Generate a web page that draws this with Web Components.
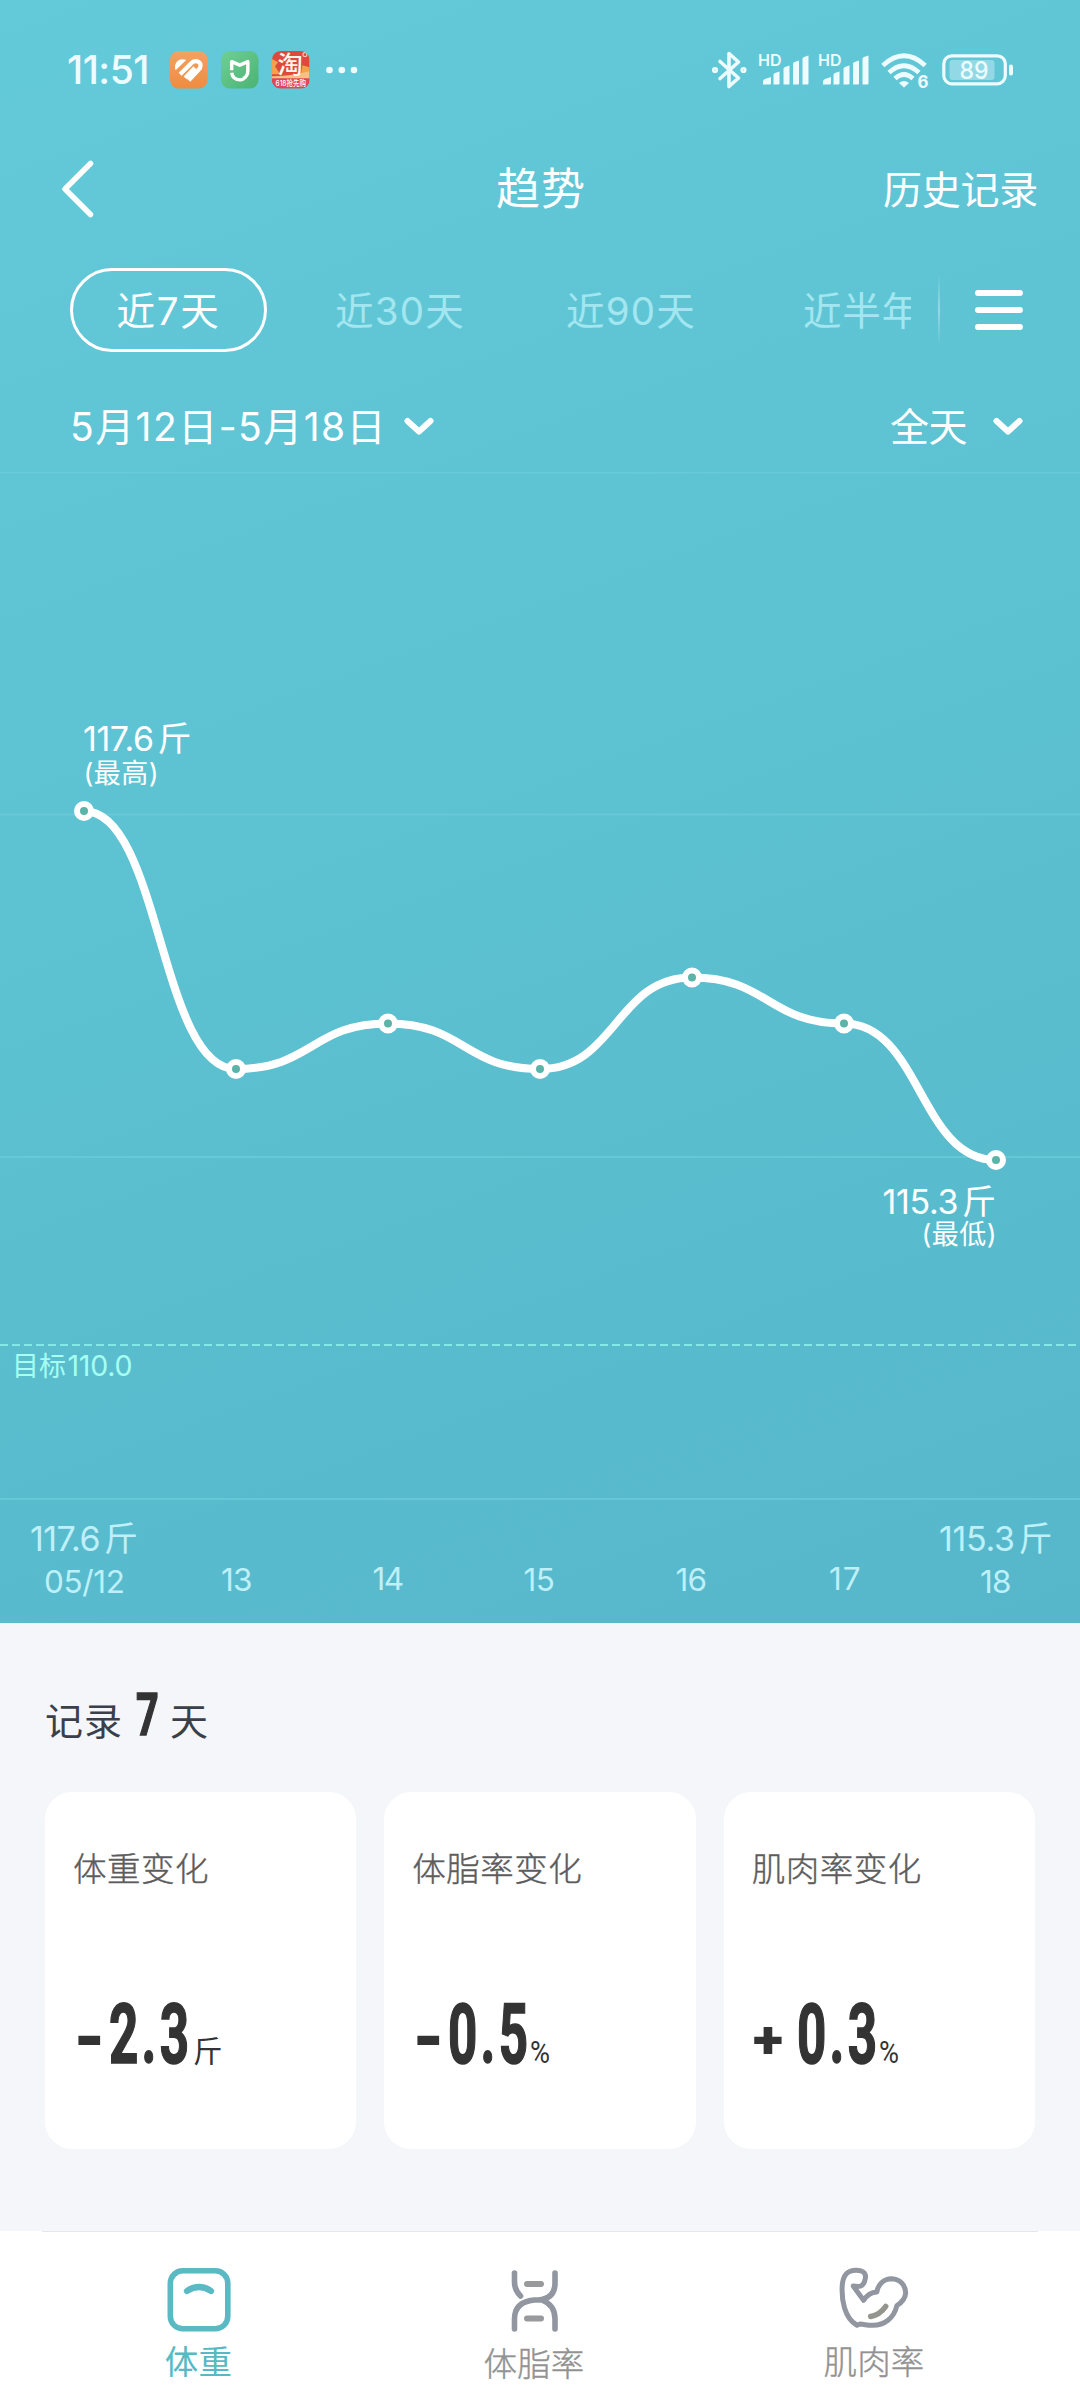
<!DOCTYPE html>
<html lang="zh-CN">
<head>
<meta charset="utf-8">
<title>趋势</title>
<style>
    body {
        margin: 0;
        width: 1080px;
        height: 2400px;
        overflow: hidden;
        background: #f4f6fa;
        font-family: Inter, "Noto Sans CJK SC", sans-serif;
    }
</style>
</head>
<body>
<trend-page></trend-page>

<script>
/**
 * Single line of text tracked out (or in) to a fixed width.
 */
class FitText extends HTMLElement {
    constructor() {
        super();
        this.attachShadow({ mode: 'open' });
    }

    connectedCallback() {
        const text = this.getAttribute('text') || '';
        this.shadowRoot.innerHTML = `
            <style>
                :host { display: block; white-space: nowrap; line-height: 1.2; }
                span { display: inline-block; }
            </style>
            <span>${text}</span>
        `;
        const width = Number(this.getAttribute('width'));
        if (!width) return;
        const span = this.shadowRoot.querySelector('span');
        const gap = (width - span.getBoundingClientRect().width) / text.length;
        span.style.letterSpacing = `${gap}px`;
    }
}

class StatusBar extends HTMLElement {
    constructor() {
        super();
        this.attachShadow({ mode: 'open' });
    }

    signal() {
        return `
            <svg width="52" height="34" viewBox="0 0 52 34" fill="#ecfcff">
                <text x="0" y="13" font-size="15.500" font-weight="600" textLength="23.500" lengthAdjust="spacingAndGlyphs">HD</text>
                <path d="M5 31.500v-3q0-2 2-2.500l6-2v6q0 1.500-1.500 1.500z"/>
                <path d="M15.500 31.500V22q0-1.500 1.500-2l4.500-1.500v12q0 1-1 1z"/>
                <path d="M25.500 31.500V16q0-1.500 1.500-2l4.500-1.500v18q0 1-1 1z"/>
                <path d="M35 31.500V11q0-1.500 1.500-2L41 7.500v23q0 1-1 1z"/>
                <path d="M44.500 31.500V6q0-1.500 1.500-2l4.500-1.500v28q0 1-1 1z"/>
            </svg>
        `;
    }

    connectedCallback() {
        this.shadowRoot.innerHTML = `
            <style>
                :host {
                    display: flex;
                    align-items: center;
                    height: 140px;
                    padding: 0 67px 0 67px;
                    box-sizing: border-box;
                    color: #ecfcff;
                }
                svg { display: block; flex: none; overflow: visible; }
                .time { font-size: 39px; font-weight: 500; width: 103px; }
                .apps { display: flex; gap: 13.500px; }
                .dots { margin-left: 16px; }
                .system { display: flex; align-items: center; margin-left: auto; }
            </style>
            <fit-text class="time" text="11:51" width="82"></fit-text>
            <div class="apps">
                <svg width="37.500" height="37.500" viewBox="0 0 37 37">
                    <defs><linearGradient id="o" x2="0" y2="1"><stop stop-color="#f0a363"/><stop offset="1" stop-color="#f08b3f"/></linearGradient></defs>
                    <rect width="37" height="37" rx="8.500" fill="url(#o)"/>
                    <path d="M5.500 19C3 12 9 5.500 16 9z" fill="#fff"/>
                    <path d="M10 23 20.500 12.500C25 7.500 32.500 11 29.500 17L18.500 29M15 26.500 24.500 16.500" fill="none" stroke="#fff" stroke-width="4.200"/>
                </svg>
                <svg width="37.500" height="37.500" viewBox="0 0 37 37">
                    <defs><linearGradient id="g" x2="1" y2="1"><stop stop-color="#6fcf94"/><stop offset="1" stop-color="#4bb374"/></linearGradient></defs>
                    <rect width="37" height="37" rx="8.500" fill="url(#g)"/>
                    <path d="M10.500 19v-8.500l8 3.500 8-3.500V19c0 4-2 7-4.500 8.200M10.500 21.500c.8 4.500 4 7 8.200 7q2 0 3.500-1" fill="none" stroke="#fff" stroke-width="3.400" stroke-linejoin="round"/>
                </svg>
                <svg width="37.500" height="37.500" viewBox="0 0 37 37">
                    <defs><clipPath id="c"><rect width="37" height="37" rx="8.500"/></clipPath></defs>
                    <g clip-path="url(#c)">
                        <rect width="37" height="37" fill="#dd4a3c"/>
                        <path d="M0 8l6 3-3 4 5 8H0zM30 14l7 2v8l-9 2z" fill="#f2a24c"/>
                        <path d="M0 25q18 0 37-5v8H0z" fill="#f5c184"/>
                        <path d="M0 27h37v10H0z" fill="#e2455a"/>
                        <circle cx="32.500" cy="3.500" r="2" fill="none" stroke="#fbd9d4"/>
                    </g>
                    <text x="5.500" y="22" font-size="24" font-weight="500" fill="#fff6ea" textLength="25" lengthAdjust="spacingAndGlyphs">淘</text>
                    <text x="3.500" y="34.500" font-size="7.500" font-weight="500" fill="#fff" textLength="30" lengthAdjust="spacingAndGlyphs">618抢先购</text>
                </svg>
            </div>
            <svg class="dots" width="32" height="8" viewBox="0 0 32 8" fill="#ecfcff">
                <circle cx="3.500" cy="4" r="3.300"/><circle cx="15.800" cy="4" r="3.300"/><circle cx="28" cy="4" r="3.300"/>
            </svg>
            <div class="system">
                <svg width="47" height="40" viewBox="0 0 47 40" fill="none" stroke="#ecfcff" stroke-width="3.600" stroke-linecap="round" stroke-linejoin="round">
                    <path d="M9 11.500 27.500 28 18 36.500V3.500L27.500 12 9 28.500"/>
                    <circle cx="4" cy="20" r="1.300"/><circle cx="32.500" cy="20" r="1.300"/>
                </svg>
                ${this.signal()}
                <svg width="8" height="1"></svg>
                ${this.signal()}
                <svg style="margin-left: 11px" width="48" height="40" viewBox="0 0 48 40" fill="none" stroke="#ecfcff" stroke-width="4.600">
                    <path d="M1.800 15.500q21.200-19.500 42.400 0M8 22.500q15-13.500 30 0M14 28.500q9-8 18 0"/>
                    <path d="M18 33q5-4 10 0l-5 4.500z" fill="#ecfcff" stroke="none"/>
                    <text x="36.500" y="37.500" font-size="18" font-weight="700" fill="#ecfcff" stroke="none" textLength="11" lengthAdjust="spacingAndGlyphs">6</text>
                </svg>
                <svg style="margin-left: 13px" width="71" height="32" viewBox="0 0 71 32">
                    <rect x="1.800" y="1.800" width="61.500" height="28" rx="8" fill="none" stroke="#ecfcff" stroke-width="3.200"/>
                    <rect x="7.500" y="6" width="45" height="20" rx="3" fill="#ecfcff" opacity=".36"/>
                    <rect x="67" y="10.500" width="4" height="11" rx="2" fill="#ecfcff"/>
                    <text x="17.500" y="24.700" font-size="24.500" font-weight="500" fill="#ecfcff" textLength="29" lengthAdjust="spacingAndGlyphs">89</text>
                </svg>
            </div>
        `;
    }
}

class TitleBar extends HTMLElement {
    constructor() {
        super();
        this.attachShadow({ mode: 'open' });
    }

    connectedCallback() {
        this.shadowRoot.innerHTML = `
            <style>
                :host {
                    display: grid;
                    grid-template-columns: 1fr auto 1fr;
                    align-items: center;
                    height: 98px;
                    padding: 0 42px 0 60px;
                    color: #fff;
                }
                .title { font-size: 44px; margin-left: -16px; }
                .history { font-size: 39px; justify-self: end; padding-top: 2px; }
            </style>
            <svg width="36" height="60" viewBox="0 0 36 60" fill="none" stroke="#fff" stroke-width="5.500" stroke-linecap="round" stroke-linejoin="round">
                <path d="M30.500 4.500 5 30l25.500 25.500"/>
            </svg>
            <fit-text class="title" text="${this.getAttribute('heading')}" width="90"></fit-text>
            <fit-text class="history" text="${this.getAttribute('action')}" width="155"></fit-text>
        `;
    }
}

class RangeTabs extends HTMLElement {
    constructor() {
        super();
        this.attachShadow({ mode: 'open' });
    }

    connectedCallback() {
        this.shadowRoot.innerHTML = `
            <style>
                :host {
                    display: flex;
                    align-items: center;
                    height: 144px;
                    padding: 0 56px 0 70px;
                    font-size: 38.500px;
                    color: #a3e6f0;
                }
                .strip {
                    display: flex;
                    align-items: center;
                    width: 842px;
                    overflow: hidden;
                }
                .strip > * { flex: none; }
                fit-text { padding-top: 2px; }
                .active {
                    display: flex;
                    align-items: center;
                    justify-content: center;
                    width: 197px;
                    height: 84px;
                    box-sizing: border-box;
                    border: 3px solid #fff;
                    border-radius: 42px;
                    color: #fff;
                }
                .divider {
                    width: 2px;
                    height: 72px;
                    margin: 0 34px 0 27px;
                    background: linear-gradient(transparent, rgba(255, 255, 255, .35), transparent);
                }
            </style>
            <div class="strip">
                <div class="active"><fit-text text="近7天" width="104"></fit-text></div>
                <fit-text style="margin-left: 68px" text="近30天" width="130"></fit-text>
                <fit-text style="margin-left: 101px" text="近90天" width="130"></fit-text>
                <fit-text style="margin-left: 107px" text="近半年" width="118"></fit-text>
            </div>
            <div class="divider"></div>
            <svg width="50" height="42" viewBox="0 0 50 42" stroke="#fff" stroke-width="6" stroke-linecap="round">
                <path d="M4 4h42M4 21h42M4 38h42"/>
            </svg>
        `;
    }
}

class FilterRow extends HTMLElement {
    constructor() {
        super();
        this.attachShadow({ mode: 'open' });
    }

    connectedCallback() {
        const arrow = `
            <svg width="32" height="20" viewBox="0 0 32 20" fill="none" stroke="#fff" stroke-width="6" stroke-linecap="round" stroke-linejoin="round">
                <path d="M4.500 4 16 14.500 27.500 4"/>
            </svg>
        `;
        this.shadowRoot.innerHTML = `
            <style>
                :host {
                    display: flex;
                    align-items: center;
                    justify-content: space-between;
                    height: 90px;
                    padding: 0 56px 0 70px;
                    font-size: 39px;
                    color: #fff;
                }
                div { display: flex; align-items: center; }
            </style>
            <div><fit-text style="width: 333px" text="${this.getAttribute('dates')}" width="317"></fit-text>${arrow}</div>
            <div><fit-text style="width: 102px" text="${this.getAttribute('period')}" width="77"></fit-text>${arrow}</div>
        `;
    }
}

class WeightChart extends HTMLElement {
    constructor() {
        super();
        this.attachShadow({ mode: 'open' });
    }

    // number and unit share one line, the unit sits a little apart
    weight(value, x, y, width) {
        return `<text class="value" x="${x}" y="${y}"><tspan textLength="${width}">${value}</tspan><tspan x="${x + width + 3.5}">斤</tspan></text>`;
    }

    connectedCallback() {
        const points = [[84, 339], [236, 597], [388, 551.500], [540, 597], [692, 505.500], [844, 551.500], [996, 688]];
        const line = points.map(([x, y], i) => {
            if (i === 0) return `M${x} ${y}`;
            const [px, py] = points[i - 1];
            return `C${px + 76} ${py} ${x - 76} ${y} ${x} ${y}`;
        }).join('');
        const days = [['13', 222, 1119], ['14', 373.500, 1118], ['15', 524.500, 1119], ['16', 676.500, 1119], ['17', 830, 1118], ['18', 981, 1121]];

        this.shadowRoot.innerHTML = `
            <style>
                :host { display: block; height: 1151px; }
                svg { display: block; }
                .grid { stroke: #70cfdc; stroke-opacity: .6; stroke-width: 2; }
                .value { font-size: 34px; }
                .note { font-size: 27px; }
                .day { font-size: 31.500px; }
                .axis { fill: #bdf0f9; }
            </style>
            <svg width="1080" height="1151" viewBox="0 0 1080 1151" fill="#fff">
                <path class="grid" d="M0 .5h1080M0 342.500h1080M0 685h1080M0 1027h1080"/>
                <path d="M0 873h1080" stroke="#86e8e6" stroke-width="2" stroke-dasharray="8 4"/>
                <text x="12" y="904" fill="#a6fff0" class="note"><tspan>目标</tspan><tspan x="67.500" font-size="28.500" textLength="65">110.0</tspan></text>

                <path d="${line}" fill="none" stroke="#fff" stroke-width="8"/>
                ${points.map(([x, y]) => `<circle cx="${x}" cy="${y}" r="7" fill="#5bb4a8" stroke="#fff" stroke-width="6"/>`).join('')}

                ${this.weight('117.6', 83, 279, 71)}
                <text class="note" x="83.500" y="311" textLength="75">(最高)</text>
                ${this.weight('115.3', 882.500, 741.500, 76)}
                <text class="note" x="921.500" y="772" textLength="75">(最低)</text>

                <g class="axis">
                    ${this.weight('117.6', 30, 1079, 70.500)}
                    <text class="day" x="44" y="1121" textLength="81">05/12</text>
                    ${days.map(([d, x, y]) => `<text class="day" x="${x - 1}" y="${y}" textLength="31.500">${d}</text>`).join('')}
                    ${this.weight('115.3', 939, 1079, 76)}
                </g>
            </svg>
        `;
    }
}

class ChangeCard extends HTMLElement {
    constructor() {
        super();
        this.attachShadow({ mode: 'open' });
    }

    connectedCallback() {
        const sign = this.getAttribute('sign');
        const unit = this.getAttribute('unit');
        const label = this.getAttribute('label');
        const start = sign === '+' ? 45 : 36;
        const end = start + 83;
        const signText = sign === '+'
            ? '<text x="1" y="62.500" font-size="51" font-weight="900" textLength="30" lengthAdjust="spacingAndGlyphs">+</text>'
            : '<text x="1" y="70.500" font-size="84" font-weight="700" textLength="31" lengthAdjust="spacingAndGlyphs">-</text>';
        const unitText = unit === '%'
            ? `<text x="${end - 1}" y="68" font-size="31" textLength="20" lengthAdjust="spacingAndGlyphs">%</text>`
            : `<text x="${end + 1}" y="67" font-size="29.500">${unit}</text>`;
        this.shadowRoot.innerHTML = `
            <style>
                :host {
                    display: flex;
                    flex-direction: column;
                    justify-content: space-between;
                    height: 357px;
                    box-sizing: border-box;
                    padding: 57px 27px 74px 28px;
                    border-radius: 27px;
                    background: #fff;
                }
                .label { font-size: 33.500px; font-weight: 300; color: #5c5c5c; -webkit-text-stroke: .4px #5c5c5c; }
                svg { display: block; overflow: visible; font-family: Roboto, "Noto Sans CJK SC", sans-serif; }
            </style>
            <fit-text class="label" text="${label}" width="${label.length * 34}"></fit-text>
            <svg width="200" height="80" viewBox="0 0 200 80" fill="#333">
                ${signText}
                <text transform="translate(${start} 68) scale(.62 1)" font-size="82.500" font-weight="700" stroke="#333" stroke-width="1.600" textLength="129">${this.getAttribute('value')}</text>
                ${unitText}
            </svg>
        `;
    }
}

class RecordSummary extends HTMLElement {
    constructor() {
        super();
        this.attachShadow({ mode: 'open' });
    }

    connectedCallback() {
        this.shadowRoot.innerHTML = `
            <style>
                :host { display: block; height: 608px; padding: 0 45px; box-sizing: border-box; }
                .heading { display: flex; align-items: baseline; height: 169px; font-size: 38px; color: #3a3f49; }
                .heading::before { content: ""; height: 112px; }
                svg { display: block; overflow: visible; font-family: Roboto, sans-serif; }
                .cards { display: grid; grid-template-columns: repeat(3, 1fr); gap: 28px; }
            </style>
            <div class="heading">
                <fit-text text="记录" width="78"></fit-text>
                <svg width="47" height="46" viewBox="0 0 47 46" fill="#333">
                    <text transform="translate(13 46) scale(.66 1)" font-size="60" font-weight="700" stroke="#333" stroke-width="1.500">${this.getAttribute('days')}</text>
                </svg>
                <fit-text text="天"></fit-text>
            </div>
            <div class="cards"><slot></slot></div>
        `;
    }
}

class NavItem extends HTMLElement {
    constructor() {
        super();
        this.attachShadow({ mode: 'open' });
    }

    connectedCallback() {
        const label = this.getAttribute('label');
        const icons = {
            scale: `
                <rect x="5.300" y="2.800" width="57.500" height="58" rx="12.500"/>
                <path d="M22 23q12-8 24 0" stroke-width="6.300"/>
            `,
            dna: `
                <path d="M14.500 5v9q0 8 6 14M55 5v10q0 14-13 16.500c-4 1-5 .2-8 .5Q14.500 34 14.500 51v10M42 32q13 5 13 19v10"/>
                <path d="M27 16h14M27 50.500h14" stroke-width="6" stroke="#999a9b"/>
            `,
            muscle: `
                <path stroke-width="5" d="M17 57.300C4 50 1.500 31 2.200 18 3 6 8 2.300 16 2.300c8.500 0 11 4 8.700 10.500-1 4.500-4 6.800-11.500 5.200L23.600 32.300c3.200-5 7-8 13.200-8.300C38 17 43 10.700 51.800 10.700 60 11 65.500 17 65.700 25c-.4 5.500-4 9.500-8.800 12.500C54 50.500 44 57.300 33 57.300c-5 .2-8-.9-13-1.300z"/>
                <path d="M30.700 48.500q9-1.500 15-10" stroke="#95958f" stroke-width="5.500"/>
            `
        };
        this.shadowRoot.innerHTML = `
            <style>
                :host {
                    display: flex;
                    flex-direction: column;
                    align-items: center;
                    padding-top: 36px;
                    color: #929292;
                    font-size: 33.500px;
                    font-weight: 300;
                    -webkit-text-stroke: .4px #929292;
                }
                :host([active]) { color: #57b9c3; font-weight: 400; -webkit-text-stroke: 0; }
                svg { display: block; margin-bottom: 9px; overflow: visible; }
                :host([icon="dna"]) svg { margin-bottom: 11px; }
            </style>
            <svg width="68" height="65" viewBox="0 0 68 65" fill="none" stroke="${this.hasAttribute('active') ? '#59bac4' : '#9196a0'}" stroke-width="5.600" stroke-linecap="round" stroke-linejoin="round">
                ${icons[this.getAttribute('icon')]}
            </svg>
            <fit-text text="${label}" width="${label.length * 33.7}"></fit-text>
        `;
    }
}

class BottomNav extends HTMLElement {
    constructor() {
        super();
        this.attachShadow({ mode: 'open' });
        this.shadowRoot.innerHTML = `
            <style>
                :host { display: block; height: 169px; padding: 0 42px; background: #fff; }
                .items {
                    display: grid;
                    grid-template-columns: 313px 358px 322px;
                    border-top: 1px solid #e4e8ec;
                }
            </style>
            <div class="items"><slot></slot></div>
        `;
    }
}

class TrendPage extends HTMLElement {
    constructor() {
        super();
        this.attachShadow({ mode: 'open' });
    }

    connectedCallback() {
        this.shadowRoot.innerHTML = `
            <style>
                :host { display: flex; flex-direction: column; height: 2400px; }
                .hero { height: 1623px; background: linear-gradient(160deg, #63cada, #5cc1d1 50%, #56b7ca); }
            </style>
            <div class="hero">
                <status-bar></status-bar>
                <title-bar heading="趋势" action="历史记录"></title-bar>
                <range-tabs></range-tabs>
                <filter-row dates="5月12日-5月18日" period="全天"></filter-row>
                <weight-chart></weight-chart>
            </div>
            <record-summary days="7">
                <change-card label="体重变化" sign="-" value="2.3" unit="斤"></change-card>
                <change-card label="体脂率变化" sign="-" value="0.5" unit="%"></change-card>
                <change-card label="肌肉率变化" sign="+" value="0.3" unit="%"></change-card>
            </record-summary>
            <bottom-nav>
                <nav-item icon="scale" label="体重" active></nav-item>
                <nav-item icon="dna" label="体脂率"></nav-item>
                <nav-item icon="muscle" label="肌肉率"></nav-item>
            </bottom-nav>
        `;
    }
}

customElements.define('fit-text', FitText);
customElements.define('status-bar', StatusBar);
customElements.define('title-bar', TitleBar);
customElements.define('range-tabs', RangeTabs);
customElements.define('filter-row', FilterRow);
customElements.define('weight-chart', WeightChart);
customElements.define('change-card', ChangeCard);
customElements.define('record-summary', RecordSummary);
customElements.define('nav-item', NavItem);
customElements.define('bottom-nav', BottomNav);
customElements.define('trend-page', TrendPage);
</script>
</body>
</html>
